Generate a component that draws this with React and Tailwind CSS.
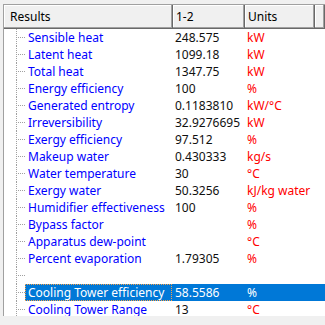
import React from 'react';

const rows = [
    { name: 'Sensible heat', value: '248.575', unit: 'kW' },
    { name: 'Latent heat', value: '1099.18', unit: 'kW' },
    { name: 'Total heat', value: '1347.75', unit: 'kW' },
    { name: 'Energy efficiency', value: '100', unit: '%' },
    { name: 'Generated entropy', value: '0.1183810', unit: 'kW/°C' },
    { name: 'Irreversibility', value: '32.9276695', unit: 'kW' },
    { name: 'Exergy efficiency', value: '97.512', unit: '%' },
    { name: 'Makeup water', value: '0.430333', unit: 'kg/s' },
    { name: 'Water temperature', value: '30', unit: '°C' },
    { name: 'Exergy water', value: '50.3256', unit: 'kJ/kg water' },
    { name: 'Humidifier effectiveness', value: '100', unit: '%' },
    { name: 'Bypass factor', value: '', unit: '%' },
    { name: 'Apparatus dew-point', value: '', unit: '°C' },
    { name: 'Percent evaporation', value: '1.79305', unit: '%' },
    { name: '', value: '', unit: '' },
    { name: 'Cooling Tower efficiency', value: '58.5586', unit: '%', selected: true },
    { name: 'Cooling Tower Range', value: '13', unit: '°C' },
];

const HeaderCell = ({ label, className }) => (
    <div className={`h-full bg-[#f0f0f0] shadow-[inset_-1px_-1px_0_#696969,inset_-2px_-2px_0_#a0a0a0,inset_1px_1px_0_#ffffff] flex items-center overflow-hidden ${className}`}>
        {label}
    </div>
);

const Row = ({ name, value, unit, selected }) => (
    <div className="flex h-[17px] shrink-0">
        {/* tree gutter */}
        <div className="relative w-[21px] shrink-0">
            <div className="absolute left-[12px] top-0 bottom-0 w-px bg-[repeating-linear-gradient(to_bottom,#a0a0a0_0_1px,transparent_1px_2px)]"></div>
            <div className="absolute left-[13px] top-[8px] w-[8px] h-px bg-[repeating-linear-gradient(to_right,transparent_0_1px,#a0a0a0_1px_2px)]"></div>
        </div>
        <div className={`flex flex-1 ${selected ? 'bg-[#0078d7] text-white' : ''}`}>
            <div className={`w-[147px] shrink-0 overflow-hidden whitespace-nowrap pl-[3px] leading-[17px] ${selected ? 'outline-1 outline-dotted outline-[#f7a04a] -outline-offset-1' : 'text-[#0000ff]'}`}>
                {name}
            </div>
            <div className={`w-[72px] shrink-0 overflow-hidden whitespace-nowrap pl-[3px] leading-[17px] ${selected ? '' : 'text-[#101010]'}`}>
                {value}
            </div>
            <div className={`flex-1 whitespace-nowrap pl-[3px] leading-[17px] ${selected ? '' : 'text-[#ff0000]'}`}>
                {unit}
            </div>
        </div>
    </div>
);

const App = () => {
    return (
        <div className="w-[325px] h-[325px] bg-[#f0f0f0] pt-[4px] pl-[3px] overflow-hidden text-[12px] font-['Noto_Sans',sans-serif]">
            <div className="h-[312px] bg-white border-l border-t border-[#a0a0a0] flex flex-col overflow-hidden">
                <div className="flex h-[24px] shrink-0 text-black">
                    <HeaderCell label="Results" className="w-[169px] shrink-0 pl-[6px]" />
                    <HeaderCell label="1-2" className="w-[72px] shrink-0 pl-[3px]" />
                    <HeaderCell label="Units" className="w-[70px] shrink-0 pl-[3px]" />
                    <HeaderCell label="" className="flex-1" />
                </div>
                {rows.map((r, i) => (
                    <Row key={i} {...r} />
                ))}
            </div>
        </div>
    );
};

export default App;
